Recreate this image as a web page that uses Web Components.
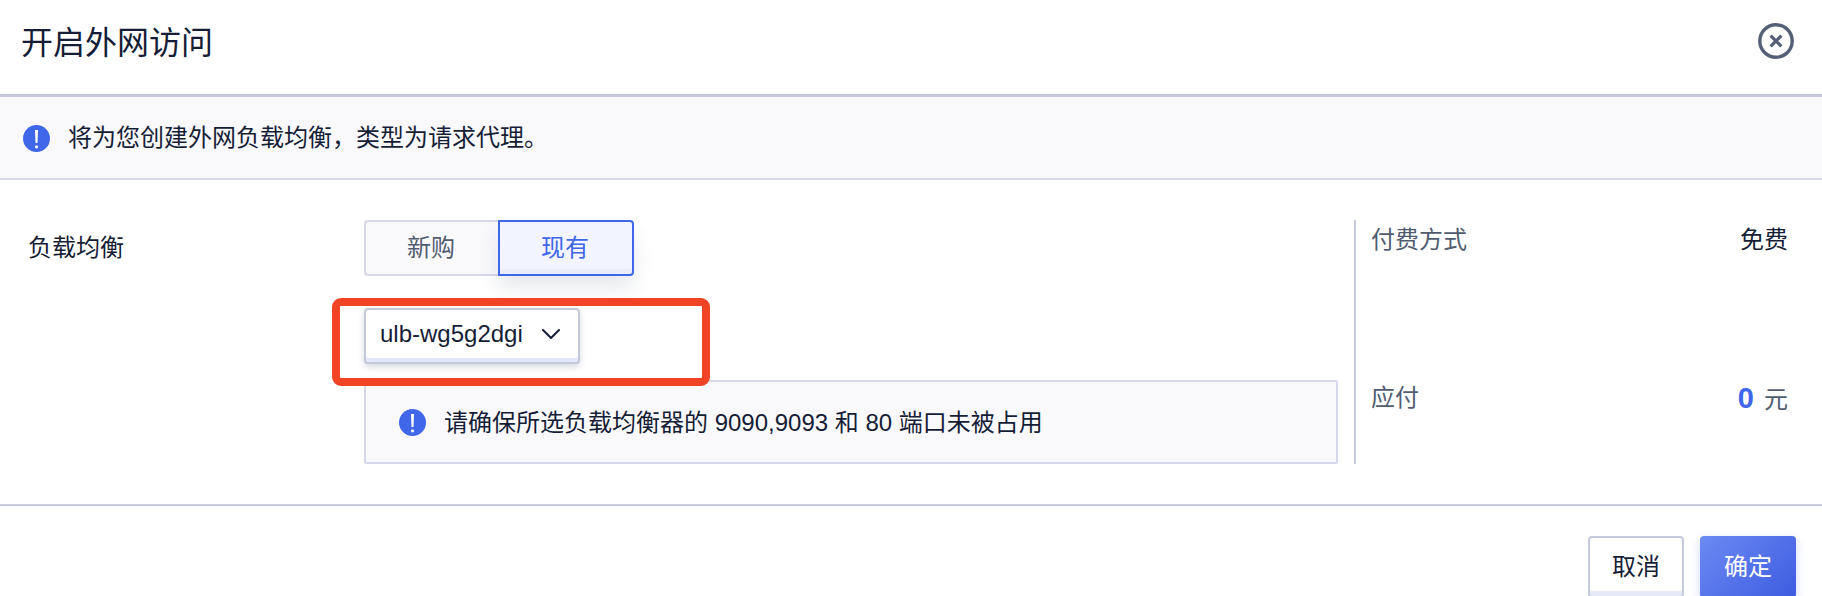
<!DOCTYPE html>
<html lang="zh">
<head>
<meta charset="utf-8">
<title>开启外网访问</title>
<style>
html,body{margin:0;padding:0;background:#fff;}
body{width:1822px;height:596px;overflow:hidden;font:24px/38px "Liberation Sans","Noto Sans CJK SC",sans-serif;color:#161d36;}
</style>
</head>
<body>
<ulb-dialog>
  <dlg-header slot="header">开启外网访问</dlg-header>
  <info-alert slot="notice" variant="bar">将为您创建外网负载均衡，类型为请求代理。</info-alert>
  <span slot="label">负载均衡</span>
  <seg-switch slot="form"></seg-switch>
  <ulb-select slot="form">ulb-wg5g2dgi</ulb-select>
  <info-alert slot="form" variant="box">请确保所选负载均衡器的 9090,9093 和 80 端口未被占用</info-alert>
  <red-mark slot="form"></red-mark>
  <price-row slot="side" label="付费方式"><span style="color:#161d36">免费</span></price-row>
  <price-row slot="side" label="应付" class="due"><span style="font-size:29px;font-weight:700;color:#4066ea">0</span><span style="color:#515c70;margin-left:10px;position:relative;top:2px">元</span></price-row>
  <dlg-button slot="footer">取消</dlg-button>
  <dlg-button slot="footer" primary>确定</dlg-button>
</ulb-dialog>
<script>
function def(name, css, html, extra){
  customElements.define(name, class extends HTMLElement{
    constructor(){super();const r=this.attachShadow({mode:'open'});r.innerHTML='<style>'+css+'</style>'+html;}
    connectedCallback(){if(extra)extra(this);}
  });
}
def('ulb-dialog',`
  :host{display:flex;flex-direction:column;width:1822px;}
  .main{display:flex;align-items:stretch;padding:40px 0 40px;border-bottom:2px solid #c8ccdc;}
  .label{width:336px;padding-left:28px;box-sizing:content-box;line-height:56px;}
  .form{position:relative;display:flex;flex-direction:column;align-items:flex-start;width:974px;}
  .side{display:flex;flex-direction:column;width:432px;margin-left:16px;padding-left:15px;box-sizing:border-box;border-left:2px solid #c5c9dc;padding-top:1px;}
  .foot{display:flex;justify-content:flex-end;gap:16px;padding:30px 26px 0 0;}
`,`
  <slot name="header"></slot>
  <slot name="notice"></slot>
  <div class="main">
    <div class="label"><slot name="label"></slot></div>
    <div class="form"><slot name="form"></slot></div>
    <div class="side"><slot name="side"></slot></div>
  </div>
  <div class="foot"><slot name="footer"></slot></div>
`);
def('dlg-header',`
  :host{display:flex;flex:none;justify-content:space-between;align-items:flex-start;height:71px;padding:23px 28px 0 21px;border-bottom:3px solid #c5c8dc;}
  .t{font-size:32px;line-height:40px;color:#161d36;}
  svg{display:block;}
`,`
  <div class="t"><slot></slot></div>
  <svg width="36" height="36" viewBox="0 0 36 36" fill="none" stroke="#555f75"><circle cx="18" cy="18" r="16.2" stroke-width="3.4"/><path d="M12.6 12.6l10.8 10.8M23.4 12.6L12.6 23.4" stroke-width="3.2"/></svg>
`);
const bang=`<svg width="27" height="27" viewBox="0 0 27 27"><circle cx="13.5" cy="13.5" r="13.5" fill="#4066ea"/><path d="M12 5h3l-.5 13h-2z" fill="#fff"/><circle cx="13.5" cy="21.8" r="1.6" fill="#fff"/></svg>`;
def('info-alert',`
  :host{display:flex;flex:none;align-items:center;box-sizing:border-box;background:#f9f9fc;color:#161d36;}
  :host([variant=bar]){height:83px;padding:1px 0 0 23px;border-bottom:2px solid #d5d8ea;gap:18px;}
  :host([variant=box]){width:974px;height:84px;margin-top:16px;padding:1px 0 0 33px;border:2px solid #d5d8ea;gap:18px;border-radius:2px;}
  svg{display:block;flex:none;}
`,bang+`<span><slot></slot></span>`);
def('seg-switch',`
  :host{display:flex;height:56px;}
  .i{box-sizing:border-box;height:56px;display:flex;align-items:center;justify-content:center;padding-right:2px;}
  .a{width:134px;background:#f9f9fc;border:2px solid #d5d8ea;border-right:0;border-radius:4px 0 0 4px;color:#515c70;}
  .b{width:136px;background:#f2f5ff;border:2px solid #4066ea;border-radius:0 4px 4px 0;color:#4066ea;box-shadow:inset 0 -5px 0 #eaeefb,0 12px 20px rgba(60,70,100,.12);}
`,`<div class="i a">新购</div><div class="i b">现有</div>`);
def('ulb-select',`
  :host{display:flex;flex:none;box-sizing:border-box;width:216px;height:56px;margin-top:32px;align-items:center;justify-content:space-between;padding:0 18px 4px 14px;background:#fff;border:2px solid #c4c8db;border-radius:4px;box-shadow:inset 0 -4px 0 #e3e7fa,0 3px 6px rgba(60,70,100,.2);color:#161d36;}
  svg{display:block;}
`,`<span><slot></slot></span><svg width="18" height="10" viewBox="0 0 18 10" fill="none" stroke="#161d36" stroke-width="2" stroke-linecap="round" stroke-linejoin="round"><path d="M1 1l8 8 8-8"/></svg>`);
def('red-mark',`
  :host{position:absolute;left:-32px;top:78px;width:378px;height:88px;box-sizing:border-box;border:8px solid #f14326;border-radius:9px;pointer-events:none;}
`,``);
def('price-row',`
  :host{display:flex;justify-content:space-between;align-items:center;height:38px;width:417px;color:#515c70;}
  :host(.due){margin-top:120px;}
`,`<span id="l"></span><span style="display:flex;align-items:center"><slot></slot></span>`,el=>{el.shadowRoot.getElementById('l').textContent=el.getAttribute('label');});
def('dlg-button',`
  :host{display:flex;flex:none;box-sizing:border-box;width:96px;height:62px;align-items:center;justify-content:center;border-radius:4px;background:#fff;border:2px solid #c5c9dc;box-shadow:inset 0 -5px 0 #e6e9f8;color:#161d36;}
  :host([primary]){border:0;background:linear-gradient(135deg,#6c8af3,#3d5ce0);color:#fff;box-shadow:0 3px 10px rgba(64,102,234,.25);}
`,`<slot></slot>`);
</script>
</body>
</html>
